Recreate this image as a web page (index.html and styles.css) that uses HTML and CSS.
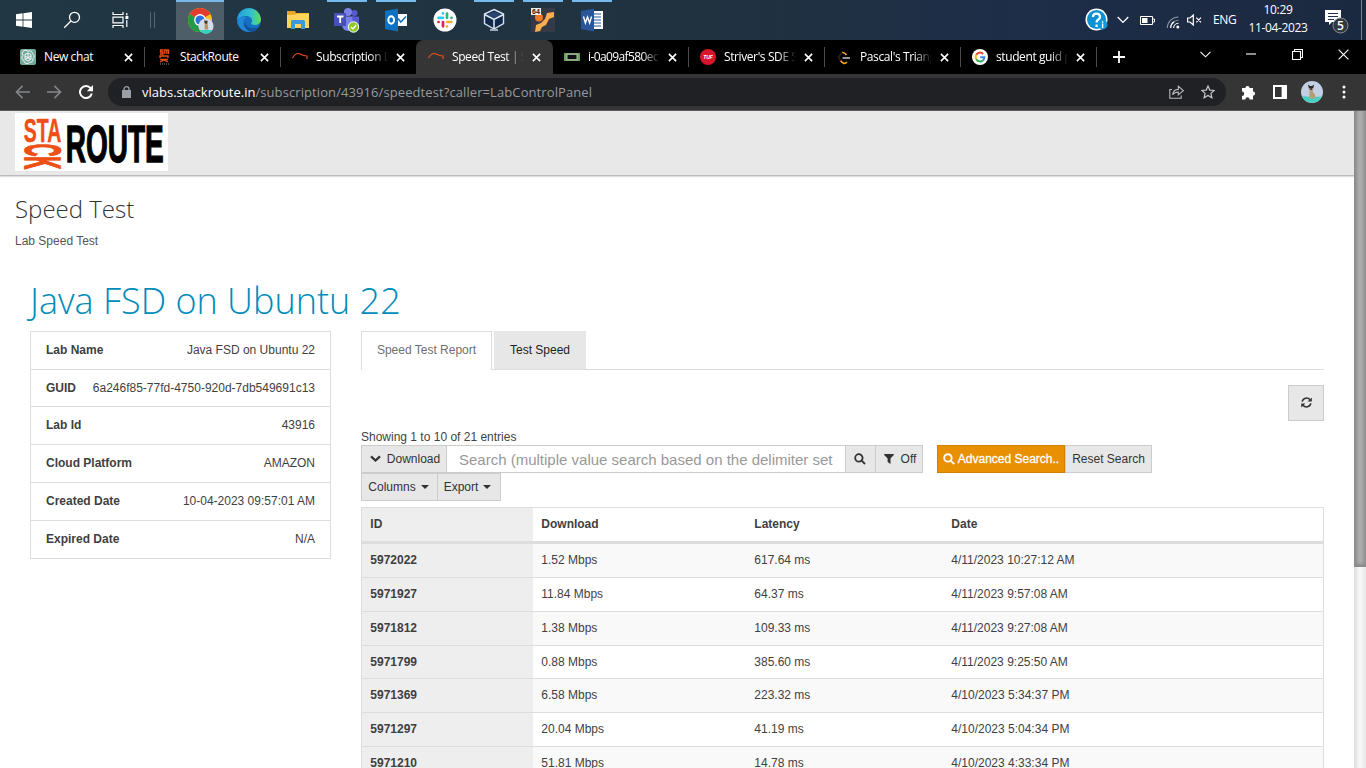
FILE: index.html
```html
<!DOCTYPE html>
<html lang="en">
<head>
<meta charset="utf-8">
<title>Speed Test | StackRoute</title>
<link rel="stylesheet" href="styles.css">
</head>
<body>
<div class="taskbar">
  <div class="slot wide"><svg width="16" height="16" viewBox="0 0 16 16"><path fill="#fff" d="M0 2.3 6.6 1.3V7.5H0ZM7.4 1.2 16 0V7.5H7.4ZM0 8.4H6.6V14.7L0 13.7ZM7.4 8.4H16V16L7.4 14.8Z"/></svg></div>
  <div class="slot wide"><svg width="18" height="18" viewBox="0 0 18 18" fill="none" stroke="#fff" stroke-width="1.3"><circle cx="11.5" cy="6.3" r="5"/><path d="M8 10 1.2 16.8"/></svg></div>
  <div class="slot wide"><svg width="17" height="16" viewBox="0 0 17 16" fill="none" stroke="#fff" stroke-width="1.2"><path d="M1 0V2.5H11V0M1 16V13.5H11V16M1 5.2H11V10.8H1ZM14.8 1V3.5M14.8 8V15"/><path fill="#fff" stroke="none" d="M13.4 4H16.4V7H13.4Z"/></svg></div>
  <div class="grip"></div>
  <div class="slot current open"><svg class="chrome" width="28" height="28" viewBox="0 0 28 28"><circle cx="13" cy="13" r="12" fill="#fbc116"/><path d="M13 13 2.6 7A12 12 0 0 1 23.4 7Z" fill="#e33b2e"/><path d="M13 13 2.6 7A12 12 0 0 0 13 25L18 16Z" fill="#229a4a"/><path d="M3 7H23.4L13 8Z" fill="#e33b2e"/><circle cx="13" cy="13" r="5.9" fill="#fff"/><circle cx="13" cy="13" r="4.6" fill="#2b73dd"/><circle cx="19" cy="19" r="7.6" fill="#d3daea"/><path d="M12.5 23A7.6 7.6 0 0 0 25.5 23Z" fill="#31d3bd"/><path d="M17 14 18 15.5H19.6L20.6 14 20.6 17.5 21.3 22.5H17.6L17.8 17.5Z" fill="#b4935e"/><path d="M17 13.6 20.6 13.8 20 16.8 18 16.6Z" fill="#3e352e"/></svg></div>
  <div class="slot"><svg width="24" height="24" viewBox="0 0 24 24"><defs><linearGradient id="edgeTop" x2="1"><stop stop-color="#249de0"/><stop offset=".6" stop-color="#32c2c9"/><stop offset="1" stop-color="#65dd50"/></linearGradient></defs><circle cx="12" cy="12" r="12" fill="#176fc1"/><path d="M.5 9A12 12 0 0 1 24 11C24 15 21 17 17.5 17 14.5 17 13.5 15.7 14.6 14.3 16 12 14 8 9.5 8 5 8 1 10 .1 13Z" fill="url(#edgeTop)"/><path d="M9 9C4 13 6 22 15 23.6 9 25 2 21 .5 15 0 11 5 8 9 9Z" fill="#2188d8"/><path d="M8.4 13C8 19 14 22 21.6 19.2 20 22 17 24 14 24 8 22 6 17 8.4 13Z" fill="#13539b"/></svg></div>
  <div class="slot"><svg width="22" height="18" viewBox="0 0 22 18"><path fill="#e7a521" d="M0 0H8L9 2H22V7H0Z"/><path fill="#ffd45e" d="M0 4 9 3.5 10 2.5H22V17H0Z"/><path fill="#3b9ade" d="M4 18V10.5Q4 9 5.5 9H16.5Q18 9 18 10.5V18H14V13H8V18Z"/></svg></div>
  <div class="slot open"><svg width="26" height="26" viewBox="0 0 26 26"><circle cx="20.5" cy="6" r="3" fill="#555bd0"/><circle cx="14" cy="5" r="4" fill="#7b83eb"/><path d="M8 9.5H20V18A6 6 0 0 1 8 18Z" fill="#7b83eb"/><path d="M18 9.5H25V17Q24 22 19 20Z" fill="#555bd0"/><path d="M0 6H12V19H0Z" fill="#4650b8"/><path d="M3 9.5H9.5M6.2 9.5V16" stroke="#fff" stroke-width="1.8"/><circle cx="19.5" cy="20" r="5.2" fill="#8ac926" stroke="#fff"/><path d="M17 20 19 22 22.2 18" fill="none" stroke="#fff" stroke-width="1.4"/></svg></div>
  <div class="slot open"><svg width="24" height="24" viewBox="0 0 24 24"><path fill="#fff" d="M12 6H23V18H12Z"/><path fill="none" stroke="#0a72c7" stroke-width="1.5" d="M14 10.5 16.8 14 22 8.5"/><path fill="#0a72c7" d="M1 3 14 0.5V23.5L1 21Z"/><ellipse cx="7.2" cy="12" rx="2.9" ry="3.7" fill="none" stroke="#fff" stroke-width="1.9"/></svg></div>
  <div class="slot"><svg width="24" height="24" viewBox="0 0 24 24"><circle cx="12" cy="12" r="11.5" fill="#fff"/><g stroke-width="2.7" stroke-linecap="round"><path stroke="#36c5f0" d="M10 5.3V5.4M5.5 9.8H10"/><path stroke="#2eb67d" d="M14 5.5V9.8M18.4 9.8H18.5"/><path stroke="#e01e5a" d="M5.5 14H5.6M10 14V18.3"/><path stroke="#ecb22e" d="M14 14H18.3M14 18.3V18.4"/></g></svg></div>
  <div class="slot open"><svg width="24" height="24" viewBox="0 0 24 24"><path fill="#11284a" stroke="#d6e1ee" stroke-width="1.4" d="M12 1.5 21.5 6V15.5L12 21 2.5 15.5V6Z"/><path fill="#29456f" d="M5 6.8 12 3.5 19 6.8 12 10.5Z"/><path fill="none" stroke="#e5edf5" stroke-width="1.5" d="M2.5 6.5 12 11.5 21.5 6.5M12 11.5V21"/><path stroke="#9eacbc" stroke-width="2" d="M8 22H16"/></svg></div>
  <div class="slot open"><svg width="24" height="24" viewBox="0 0 24 24"><path fill="#363a48" d="M0 0H24V24H0Z"/><path fill="#fbae4d" d="M4 24 5 17 10 15 14 11 16 5 23 4V9L18 11 15 17 11 19 9 23Z"/><circle cx="8" cy="9.5" r="4" fill="#f17720"/><path fill="#eee" d="M0 0H10V7H0Z"/><text class="tiny" x="1" y="6">64</text></svg></div>
  <div class="slot open"><svg width="24" height="24" viewBox="0 0 24 24"><path fill="#fff" d="M12 3H23V21H12Z"/><path stroke="#2a5699" stroke-width="1.2" d="M14 6H21M14 9H21M14 12H21M14 15H21M14 18H21"/><path fill="#2a5699" d="M1 3 14 .5V23.5L1 21Z"/><path fill="none" stroke="#fff" stroke-width="1.4" d="M3.5 8.5 5.4 15 7.5 9 9.6 15 11.5 8.5"/></svg></div>
  <div class="tray">
    <svg class="t-help" width="24" height="24" viewBox="0 0 24 24"><circle cx="11.5" cy="11.5" r="11" fill="#fff"/><circle cx="11.5" cy="11.5" r="9.5" fill="#0c92d2"/><path d="M8 9Q8 5.6 11.5 5.6T15 9Q15 10.6 13 11.8 11.6 12.8 11.6 14.5M11.6 16.5V19" fill="none" stroke="#fff" stroke-width="2.3"/><circle cx="17.6" cy="16.6" r="4.9" fill="#1396d8"/><path d="M17.6 13.3V14.7M17.6 15.6V20" stroke="#fff" stroke-width="1.4"/></svg>
    <svg class="t-chev" width="12" height="8" viewBox="0 0 12 8"><path d="M.7 1 6 6.4 11.3 1" fill="none" stroke="#fff" stroke-width="1.3"/></svg>
    <svg class="t-bat" width="15" height="9" viewBox="0 0 15 9"><path fill="none" stroke="#fff" d="M.5 .5H12.5V8.5H.5ZM13 3H14.5V6H13"/><path fill="#fff" d="M2 2H7.5V7H2Z"/></svg>
    <svg class="t-wifi" width="14" height="14" viewBox="0 0 14 14" fill="none" stroke-width="1.1"><path stroke="#8693a6" d="M1.3 13A11.2 11.2 0 0 1 12.5 2M4.6 13A8 8 0 0 1 12.5 5.2"/><path stroke="#fff" d="M7.6 13A5 5 0 0 1 12.5 8.2M4.6 13A8 8 0 0 1 8 6.8"/><circle cx="11.8" cy="12" r="1.5" fill="#fff"/></svg>
    <svg class="t-vol" width="15" height="12" viewBox="0 0 15 12" fill="none" stroke="#fff" stroke-width="1.2"><path d="M.6 4H3L6.3 1V11L3 8H.6ZM9.3 3.7 14 8.4M14 3.7 9.3 8.4"/></svg>
    <span class="lang">ENG</span>
    <div class="clock"><span>10:29</span><span>11-04-2023</span></div>
    <svg class="t-note" width="26" height="26" viewBox="0 0 26 26"><path fill="#fff" d="M0 1H16V13H7L4 16V13H0Z"/><path stroke="#202f49" d="M3 4.5H13M3 7.5H13M3 10.5H9"/><circle cx="15.5" cy="16.5" r="7.5" fill="#32383f" stroke="#8a9096"/><text class="count" x="15.5" y="20.5" text-anchor="middle">5</text></svg>
    <div class="peek"></div>
  </div>
</div>

<div class="tabstrip">
  <div class="tab"><svg class="fav" viewBox="0 0 16 16"><rect width="16" height="16" rx="2" fill="#74aa9c"/><g fill="none" stroke="#fff" stroke-width=".9"><path d="M8 2.3A3 3 0 0 1 12.5 4.5 3 3 0 0 1 13 9.5 3 3 0 0 1 9.5 13.3 3 3 0 0 1 4 11.7 3 3 0 0 1 3 6.5 3 3 0 0 1 8 2.3Z"/><path d="M5 5.5 8 4 11 5.6V10L8 12 5 10.3ZM5 7 11 10.5M8 4 8 8M11 7 5 10.5"/></g></svg><span class="title">New chat</span><svg class="x" viewBox="0 0 9 9"><path d="M.9 .9 8.1 8.1M8.1 .9 .9 8.1"/></svg></div>
  <div class="tab"><svg class="fav" viewBox="0 0 16 16"><g fill="none" stroke="#e94f1a" stroke-width="1.3"><path d="M7 1H4.5V3H7V5H4M7.5 1H10M8.8 1V5M10.8 5V1H12.5V5M4 9V7H12V9M4 10.5H12M4 13 8 11 12 13"/></g><path stroke="#444" stroke-width="2" stroke-dasharray="1 1" d="M4 15H13"/></svg><span class="title">StackRoute</span><svg class="x" viewBox="0 0 9 9"><path d="M.9 .9 8.1 8.1M8.1 .9 .9 8.1"/></svg></div>
  <div class="tab"><svg class="fav" viewBox="0 0 16 16"><path d="M.5 9Q4 3 8 5T15 7V10" fill="none" stroke="#e94f1a" stroke-width="1.2"/></svg><span class="title fade">Subscription D</span><svg class="x" viewBox="0 0 9 9"><path d="M.9 .9 8.1 8.1M8.1 .9 .9 8.1"/></svg></div>
  <div class="tab active"><svg class="fav" viewBox="0 0 16 16"><path d="M.5 9Q4 3 8 5T15 7V10" fill="none" stroke="#e94f1a" stroke-width="1.2"/></svg><span class="title fade">Speed Test | S</span><svg class="x" viewBox="0 0 9 9"><path d="M.9 .9 8.1 8.1M8.1 .9 .9 8.1"/></svg></div>
  <div class="tab"><svg class="fav" viewBox="0 0 16 16"><path fill="#68a35a" d="M0 4H16V12H0Z"/><path fill="#101010" stroke="#ddd" stroke-width=".8" d="M3 5.3H13V10.7H3Z"/></svg><span class="title fade tight">i-0a09af580ec</span><svg class="x" viewBox="0 0 9 9"><path d="M.9 .9 8.1 8.1M8.1 .9 .9 8.1"/></svg></div>
  <div class="tab"><svg class="fav" viewBox="0 0 16 16"><circle cx="8" cy="8" r="8" fill="#d9142b"/><text class="tuf" x="8" y="10" text-anchor="middle">TUF</text></svg><span class="title fade">Striver's SDE S</span><svg class="x" viewBox="0 0 9 9"><path d="M.9 .9 8.1 8.1M8.1 .9 .9 8.1"/></svg></div>
  <div class="tab"><svg class="fav" viewBox="0 0 16 16" fill="none" stroke-width="1.6"><path stroke="#f8a11b" d="M6 3.5Q8.5 3 10.5 6M4.5 11.5Q8 16.5 11 13"/><path stroke="#222" d="M6 3.5 2.5 8 4.5 11.5"/><path stroke="#bbb" d="M6.5 9H14"/></svg><span class="title fade">Pascal's Triang</span><svg class="x" viewBox="0 0 9 9"><path d="M.9 .9 8.1 8.1M8.1 .9 .9 8.1"/></svg></div>
  <div class="tab"><svg class="fav" viewBox="0 0 16 16"><circle cx="8" cy="8" r="8" fill="#fff"/><g fill="none" stroke-width="2"><path stroke="#ea4335" d="M4.2 5.8A4.4 4.4 0 0 1 11.2 5"/><path stroke="#fbbc05" d="M4.2 5.8A4.6 4.6 0 0 0 4.2 10.3"/><path stroke="#34a853" d="M4.2 10.3A4.4 4.4 0 0 0 10.8 11.4"/><path stroke="#4285f4" d="M8.2 8.2H12.4Q12.2 10.4 10.8 11.4"/></g></svg><span class="title fade">student guid p</span><svg class="x" viewBox="0 0 9 9"><path d="M.9 .9 8.1 8.1M8.1 .9 .9 8.1"/></svg></div>
  <svg class="plus" width="12" height="12" viewBox="0 0 12 12"><path d="M6 0V12M0 6H12" stroke="#fff" stroke-width="1.8"/></svg>
  <div class="winctl">
    <span><svg width="11" height="7" viewBox="0 0 11 7"><path d="M.5 .8 5.5 5.8 10.5 .8"/></svg></span>
    <span><svg width="10" height="2" viewBox="0 0 10 2"><path d="M0 1H10"/></svg></span>
    <span><svg width="11" height="11" viewBox="0 0 11 11"><path d="M.5 2.5H8.5V10.5H.5ZM2.5 2.5V.5H10.5V8.5H8.5"/></svg></span>
    <span><svg width="11" height="11" viewBox="0 0 11 11"><path d="M.6 .6 10.4 10.4M10.4 .6 .6 10.4"/></svg></span>
  </div>
</div>

<div class="toolbar">
  <span class="tool"><svg width="15" height="14" viewBox="0 0 15 14" fill="none" stroke="#85868a" stroke-width="1.6"><path d="M15 7H1.5M7.6 .9 1.5 7 7.6 13.1"/></svg></span>
  <span class="tool"><svg width="15" height="14" viewBox="0 0 15 14" fill="none" stroke="#85868a" stroke-width="1.6"><path d="M0 7H13.5M7.4 .9 13.5 7 7.4 13.1"/></svg></span>
  <span class="tool"><svg width="14" height="14" viewBox="0 0 14 14"><path d="M11.6 3.2A6 6 0 1 0 12.8 8.6" fill="none" stroke="#fff" stroke-width="2"/><path fill="#fff" d="M14 0V6.2H7.8Z"/></svg></span>
  <div class="omnibox">
    <svg width="9" height="12" viewBox="0 0 9 12"><path fill="#9aa0a6" d="M0 4H9V12H0Z"/><path d="M2 4.5V3A2.5 2.3 0 0 1 7 3V4.5" fill="none" stroke="#9aa0a6" stroke-width="1.3"/></svg>
    <span class="url"><b>vlabs.stackroute.in</b>/subscription/43916/speedtest?caller=LabControlPanel</span>
    <svg class="share" width="15" height="14" viewBox="0 0 15 14" fill="none" stroke="#b9bcc0" stroke-width="1.1"><path d="M3 4.5H.8V13.2H12.2V10.5M3.6 9.8Q4.2 4.6 9.3 4.4V1.2L14.3 5.6 9.3 9.8V7Q5.5 7 3.6 9.8Z"/></svg>
    <svg width="14" height="14" viewBox="0 0 14 14"><path fill="none" stroke="#c4c7ca" stroke-width="1.2" d="M7 1 8.8 5.1 13.2 5.5 9.9 8.4 10.9 12.8 7 10.5 3.1 12.8 4.1 8.4 .8 5.5 5.2 5.1Z"/></svg>
  </div>
  <span class="tool ext"><svg width="15" height="15" viewBox="0 0 15 15"><path fill="#fff" d="M1 3H4.4A2.1 2.1 0 1 1 8.6 3H12V6.5A2.1 2.1 0 1 1 12 10.7V14.4H8.6A2.1 2.1 0 0 0 4.4 14.4H1V10.9A2.2 2.2 0 0 0 1 6.5Z"/></svg></span>
  <span class="tool"><svg width="14" height="14" viewBox="0 0 14 14"><path fill="#fff" d="M0 0H14V14H0Z"/><path fill="#353535" d="M2 2H8.6V12H2Z"/></svg></span>
  <span class="tool"><svg width="22" height="22" viewBox="0 0 22 22"><circle cx="11" cy="11" r="11" fill="#c3cfe5"/><path fill="#48d1c2" d="M.8 15Q8 16 20.8 15.5A11 11 0 0 1 .8 15Z"/><path fill="#b79d74" d="M8.5 7H11.5L12 11 14 13.5 14.5 17.5H8.5Z"/><path fill="#2d2826" d="M7 3.5 9 5H11L13 3.5 12.3 7.5 10.5 9 8 8Z"/><path fill="#e3d6bb" d="M8.3 7H9.2V7.8H8.3ZM10.8 7H11.7V7.8H10.8Z"/></svg></span>
  <span class="tool"><svg width="4" height="14" viewBox="0 0 4 14"><g fill="#fff"><circle cx="2" cy="2" r="1.5"/><circle cx="2" cy="7" r="1.5"/><circle cx="2" cy="12" r="1.5"/></g></svg></span>
</div>

<div class="viewport">
  <div class="page">
    <header class="banner">
      <svg class="logo" width="153" height="58" viewBox="0 0 153 58">
        <path fill="#fff" d="M0 0H153V58H0Z"/>
        <g class="logo-text">
          <text fill="#ee4f14" stroke="#ee4f14" stroke-width=".5" transform="translate(8.8 28.6)" textLength="37.5" lengthAdjust="spacingAndGlyphs" font-size="33">STA</text>
          <text fill="#ee4f14" stroke="#ee4f14" stroke-width="1.8" transform="translate(10.3 30.8) rotate(90)" textLength="25.4" lengthAdjust="spacingAndGlyphs" font-size="50">CK</text>
          <text fill="#000" stroke="#000" stroke-width="1.3" transform="translate(50.8 49.3)" textLength="98" lengthAdjust="spacingAndGlyphs" font-size="51.5">ROUTE</text>
        </g>
      </svg>
    </header>
    <h2 class="heading">Speed Test</h2>
    <p class="sub">Lab Speed Test</p>
    <h1 class="lab">Java FSD on Ubuntu 22</h1>
    <div class="columns">
      <ul class="facts">
        <li><b>Lab Name</b><span>Java FSD on Ubuntu 22</span></li>
        <li class="short"><b>GUID</b><span>6a246f85-77fd-4750-920d-7db549691c13</span></li>
        <li><b>Lab Id</b><span>43916</span></li>
        <li><b>Cloud Platform</b><span>AMAZON</span></li>
        <li><b>Created Date</b><span>10-04-2023 09:57:01 AM</span></li>
        <li><b>Expired Date</b><span>N/A</span></li>
      </ul>
      <section class="report">
        <nav class="nav"><a class="on">Speed Test Report</a><a>Test Speed</a></nav>
        <div class="refresh-row"><button class="btn refresh"><svg width="11" height="11" viewBox="0 0 11 11"><path d="M1.2 4.6A4.4 4.4 0 0 1 9 2.8M9.8 6.4A4.4 4.4 0 0 1 2 8.2" fill="none" stroke="#333" stroke-width="1.6"/><path fill="#333" d="M10.8 .4V4.6H6.6ZM.2 10.6V6.4H4.4Z"/></svg></button></div>
        <div class="showing">Showing 1 to 10 of 21 entries</div>
        <div class="controls">
          <button class="btn dl"><svg width="11" height="8" viewBox="0 0 11 8"><path d="M1 1.4 5.5 5.6 10 1.4" fill="none" stroke="#333" stroke-width="2.2"/></svg>Download</button>
          <div class="field">Search (multiple value search based on the delimiter set</div>
          <button class="btn mag"><svg width="12" height="12" viewBox="0 0 12 12" fill="none" stroke="#333" stroke-width="1.8"><circle cx="4.9" cy="4.9" r="3.7"/><path d="M7.7 7.7 11 11"/></svg></button>
          <button class="btn off"><svg width="10" height="10" viewBox="0 0 10 10"><path fill="#333" d="M.2 0H9.8V1L6.5 4.6V10L3.6 8V4.6L.2 1Z"/></svg>Off</button>
          <button class="btn adv"><svg width="12" height="12" viewBox="0 0 12 12" fill="none" stroke="#fff" stroke-width="1.9"><circle cx="4.9" cy="4.9" r="3.7"/><path d="M7.7 7.7 11.2 11.2"/></svg>Advanced Search..</button>
          <button class="btn reset">Reset Search</button>
        </div>
        <div class="controls">
          <button class="btn cols">Columns<i class="caret"></i></button>
          <button class="btn exp">Export<i class="caret"></i></button>
        </div>
        <div class="grid">
          <div class="row head"><span>ID</span><span>Download</span><span>Latency</span><span>Date</span></div>
          <div class="row"><span>5972022</span><span>1.52 Mbps</span><span>617.64 ms</span><span>4/11/2023 10:27:12 AM</span></div>
          <div class="row"><span>5971927</span><span>11.84 Mbps</span><span>64.37 ms</span><span>4/11/2023 9:57:08 AM</span></div>
          <div class="row"><span>5971812</span><span>1.38 Mbps</span><span>109.33 ms</span><span>4/11/2023 9:27:08 AM</span></div>
          <div class="row short"><span>5971799</span><span>0.88 Mbps</span><span>385.60 ms</span><span>4/11/2023 9:25:50 AM</span></div>
          <div class="row"><span>5971369</span><span>6.58 Mbps</span><span>223.32 ms</span><span>4/10/2023 5:34:37 PM</span></div>
          <div class="row"><span>5971297</span><span>20.04 Mbps</span><span>41.19 ms</span><span>4/10/2023 5:04:34 PM</span></div>
          <div class="row"><span>5971210</span><span>51.81 Mbps</span><span>14.78 ms</span><span>4/10/2023 4:33:34 PM</span></div>
        </div>
      </section>
    </div>
  </div>
  <div class="scrollbar"><div class="thumb"></div></div>
</div>
</body>
</html>
```
FILE: styles.css
```css
* { box-sizing: border-box; }
html, body { height: 100%; }
body {
  margin: 0;
  overflow: hidden;
  display: flex;
  flex-direction: column;
  font: 12px/18px "Liberation Sans", Arial, sans-serif;
  color: #3f3f3f;
  background: #fff;
}
svg { display: block; flex: none; }

/* Taskbar */
.taskbar {
  height: 40px;
  flex: none;
  display: flex;
  background: linear-gradient(90deg, #213743 0%, #20323f 50%, #1e2d48 75%, #1b2940 100%);
  font-family: "Open Sans", "Noto Sans", sans-serif;
  color: #fff;
}
.slot { width: 48px; margin-right: 1px; display: flex; align-items: center; justify-content: center; border-top: 2px solid transparent; padding-bottom: 2px; }
.slot.wide { margin-right: 0; }
.slot.open { width: 40px; margin: 0 5px 0 4px; border-color: #76b9ed; }
.slot.current { width: 48px; margin: 0 1px 0 0; background: #4d5e68; }
.chrome { margin: 2px 0 0 2px; }
.grip { width: 5px; height: 16px; margin: 12px 21px 0 6px; border: solid #566772; border-width: 0 1px; }
.tiny { font: bold 7px "Liberation Sans", sans-serif; fill: #222; }
.tray { margin-left: auto; display: flex; align-items: center; }
.t-help { margin-right: 8px; }
.t-chev { margin-right: 11px; }
.t-bat { margin-right: 11px; margin-top: 1px; }
.t-wifi { margin-right: 7px; margin-top: 4px; }
.t-vol { margin-right: 11px; }
.lang { width: 24px; letter-spacing: -.3px; }
.clock { width: 60px; margin-left: 11px; display: flex; flex-direction: column; align-items: center; line-height: 18px; letter-spacing: -.35px; padding-bottom: 2px; white-space: nowrap; }
.t-note { margin: 3px 10px 0 17px; }
.count { font: 600 12px "Open Sans", sans-serif; fill: #fff; }
.peek { width: 5px; height: 40px; border-left: 1px solid #77818f; }

/* Browser tabs */
.tabstrip { height: 34px; flex: none; display: flex; background: #000; padding-left: 8px; font-family: "Open Sans", "Noto Sans", sans-serif; }
.tab { width: 136px; flex: none; display: flex; align-items: center; padding: 0 11px 0 12px; position: relative; color: #fff; }
.tab::after { content: ""; position: absolute; right: -1px; top: 7px; width: 1px; height: 20px; background: #4b4c4f; }
.tab.active { background: #353535; border-radius: 8px 8px 0 0; box-shadow: 1px 0 #353535; }
.tab.active::after, .tab:has(+ .active)::after { background: none; }
.fav { width: 16px; height: 16px; }
.title { width: 73px; margin: 0 8px; overflow: hidden; white-space: nowrap; letter-spacing: -.4px; }
.title.tight { letter-spacing: -.6px; }
.title.fade { -webkit-mask-image: linear-gradient(90deg, #000 75%, transparent); mask-image: linear-gradient(90deg, #000 75%, transparent); }
.x { width: 9px; height: 9px; fill: none; stroke: #fff; stroke-width: 1.6; }
.tuf { font: italic bold 5px "Liberation Sans", sans-serif; fill: #fff; }
.plus { margin: 11px 0 0 17px; }
.winctl { margin-left: auto; display: flex; height: 28px; }
.winctl span { width: 46px; display: flex; align-items: center; justify-content: center; }
.winctl svg { fill: none; stroke: #fff; stroke-width: 1.1; }

/* Address bar */
.toolbar { height: 37px; flex: none; display: flex; align-items: center; background: #353535; border-bottom: 1px solid #5e5a5e; padding: 0 6px; }
.tool { width: 32px; display: flex; justify-content: center; }
.tool.ext { margin-left: 6px; }
.omnibox { width: 1118px; margin-left: 6px; height: 28px; border-radius: 14px; background: #202124; display: flex; align-items: center; padding: 0 11px 0 14px; font: 13px "Open Sans", "Noto Sans", sans-serif; color: #969a9f; }
.url { margin-left: 11px; letter-spacing: .09px; white-space: nowrap; }
.url b { font-weight: 400; color: #fff; letter-spacing: 0; }
.share { margin: 0 17px 0 auto; }

/* Page */
.viewport { flex: 1; min-height: 0; display: flex; overflow: hidden; }
.page { width: 1354px; overflow: hidden; }
.scrollbar { width: 12px; background: linear-gradient(90deg, #ddd, #fafafa 50%, #e6e6e6); }
.thumb { height: 456px; background: linear-gradient(90deg, #888, #b1b1b1 50%, #929292); box-shadow: inset 0 -3px 3px #8b8b8b; }
.banner { height: 65px; padding: 2px 15px; background: #e8e8e8; border-bottom: 1px solid #bbb; box-shadow: 0 1px 1px #ddd; }
.logo-text { font-family: "Liberation Sans", Arial, sans-serif; font-weight: bold; }
.heading { margin: 16px 0 0 15px; font: 300 24px/33px "Open Sans", sans-serif; color: #333; }
.sub { margin: 7px 0 0 15px; color: #555; }
.lab { margin: 25px 0 0 30px; font: 300 36px/52px "Open Sans", sans-serif; color: #008cba; height: 54px; white-space: nowrap; }
.columns { display: flex; padding: 2px 0 0 30px; }
.facts { width: 301px; height: 228px; margin: 0 30px 0 0; padding: 0; list-style: none; border: 1px solid #ddd; border-bottom: 0; }
.facts li { height: 38px; padding: 0 15px 1px; display: flex; justify-content: space-between; align-items: center; border-bottom: 1px solid #ddd; white-space: nowrap; }
.facts li.short { height: 37px; padding-bottom: 0; }
.report { width: 963px; }
.nav { height: 39px; display: flex; gap: 2px; border-bottom: 1px solid #ddd; }
.nav a { height: 38px; width: 92px; text-align: center; line-height: 38px; background: #e7e7e7; color: #222; }
.nav .on { width: 131px; height: 39px; background: #fff; border: 1px solid #ddd; border-bottom: 0; line-height: 36px; color: #6f6f6f; }
.refresh-row { display: flex; justify-content: flex-end; padding-top: 15px; }
.btn { height: 28px; margin: 0; padding: 0 0 1px; border: 1px solid #ccc; background: #e7e7e7; color: #333; font: inherit; display: flex; align-items: center; justify-content: center; white-space: nowrap; }
.refresh { width: 36px; height: 36px; }
.showing { padding-top: 7px; height: 24px; line-height: 18px; }
.controls { display: flex; height: 28px; }
.dl { width: 86px; gap: 6px; padding-left: 2px; }
.field { width: 398px; border: 1px solid #ccc; border-width: 1px 0; padding-left: 12px; font-size: 15px; line-height: 28px; color: #999; white-space: nowrap; overflow: hidden; }
.mag { width: 31px; padding-right: 2px; }
.off { width: 48px; margin-right: 14px; gap: 7px; margin-left: -1px; padding-left: 2px; }
.adv { width: 128px; gap: 3px; background: #e99002; border-color: #d08002; color: #fff; -webkit-text-stroke: .3px #fff; }
.reset { width: 87px; }
.cols { width: 77px; padding-right: 2px; }
.exp { width: 64px; margin-left: -1px; padding-right: 3px; }
.caret { margin-left: 5px; border: 4px solid transparent; border-top-color: #333; border-bottom: 0; }
.grid { margin-top: 6px; border: 1px solid #ddd; }
.row { display: grid; grid-template-columns: 171px 213px 197px 1fr; height: 34px; line-height: 33px; border-bottom: 1px solid #ddd; background: #fff; }
.row:nth-child(even) { background: #f9f9f9; }
.row.short { height: 33px; }
.row.short span { height: 32px; }
.row span { padding-left: 8.3px; }
.row span:first-child { background: #eee; font-weight: bold; }
.row.head { height: 36px; border-bottom-width: 3px; font-weight: bold; line-height: 32px; }
```
